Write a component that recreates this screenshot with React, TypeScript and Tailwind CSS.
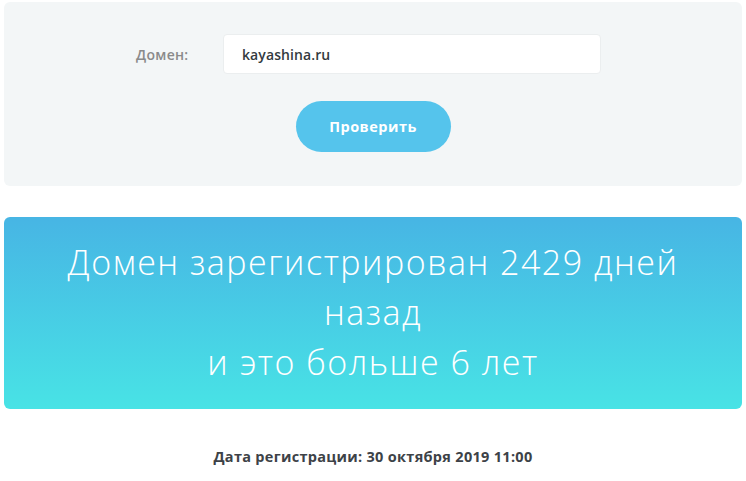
import React from 'react';

export default function App() {
  return (
    <div className="min-h-screen bg-white px-[4px] pt-[2px] font-['Open_Sans',sans-serif]">
      {/* Search form */}
      <div className="h-[184px] rounded-md bg-[#f3f6f7] pt-[32px]">
        <div className="flex items-center pl-[132px]">
          <label className="w-[87px] text-[14px] font-semibold tracking-[0.3px] text-[#8a8a8a]">Домен:</label>
          <div className="flex h-[40px] w-[378px] items-center rounded-sm border border-[#ebeeef] bg-white px-[18px] text-[14px] font-semibold tracking-[0.1px] text-[#333a40]">
            kayashina.ru
          </div>
        </div>
        <div className="mt-[27px] flex justify-center">
          <button className="h-[51px] w-[155px] rounded-full bg-[#55c4ec] text-[14.5px] font-bold tracking-[0.5px] text-white">
            Проверить
          </button>
        </div>
      </div>

      {/* Result */}
      <div className="mt-[31px] h-[192px] rounded-md bg-gradient-to-b from-[#47b5e4] to-[#48e3e5] pt-[20px] text-center text-[34px] font-light leading-[50px] tracking-[1.5px] text-white">
        <div>Домен зарегистрирован 2429 дней</div>
        <div>назад</div>
        <div>и это больше 6 лет</div>
      </div>

      <div className="mt-[38px] text-center text-[14.5px] font-bold leading-[20px] tracking-[0.3px] text-[#3d4247]">
        Дата регистрации: 30 октября 2019 11:00
      </div>
    </div>
  );
}
